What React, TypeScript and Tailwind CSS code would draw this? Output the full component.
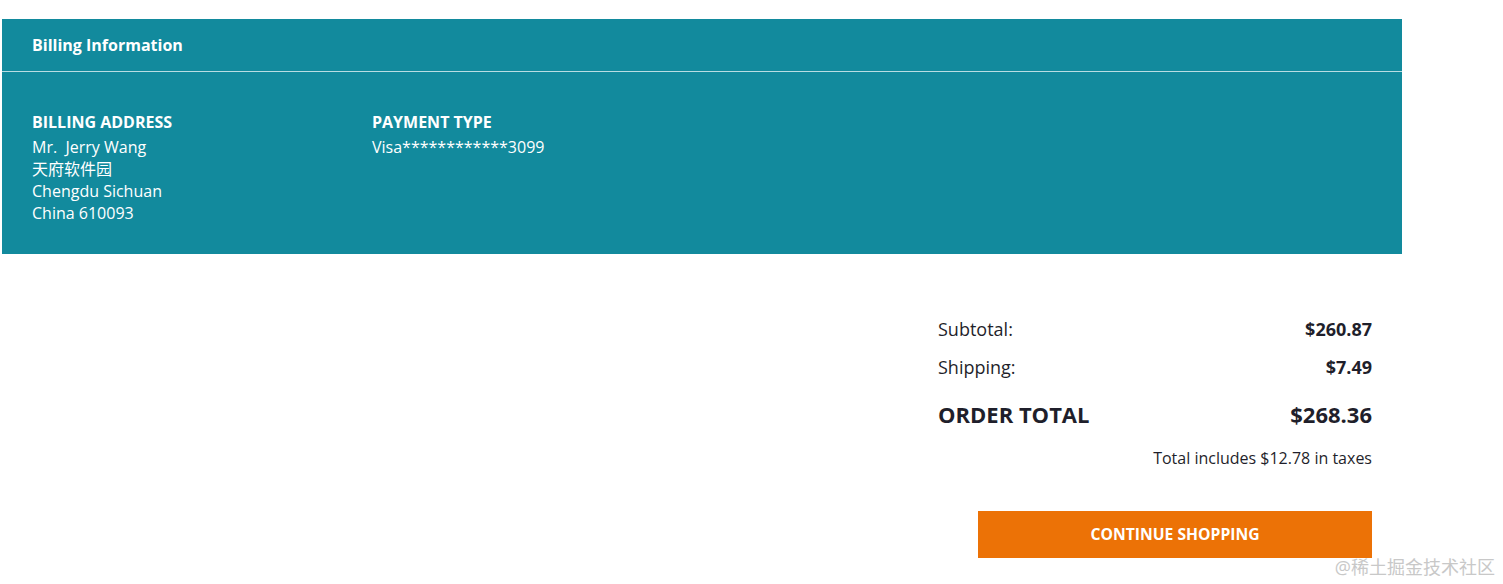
export default function App() {
  const font = { fontFamily: '"Open Sans", "Noto Sans CJK SC", sans-serif' };
  return (
    <div className="relative w-[1503px] h-[584px] bg-white text-[#1f1f2b]" style={font}>
      <div className="pt-[19px] pl-[2px]">
        <div className="w-[1400px] bg-[#128a9d] text-white">
          <div className="h-[53px] flex items-center px-[30px] border-b border-[#b9dde3]">
            <h2 className="text-[16px] font-bold">Billing Information</h2>
          </div>
          <div className="flex px-[30px] pt-[39px] pb-[30px] text-[16px] leading-[22px]">
            <div className="w-[340px]">
              <div className="font-bold uppercase mb-[3px]">Billing Address</div>
              <div>Mr.&nbsp; Jerry Wang</div>
              <div>天府软件园</div>
              <div>Chengdu Sichuan</div>
              <div>China 610093</div>
            </div>
            <div>
              <div className="font-bold uppercase mb-[3px]">Payment Type</div>
              <div>Visa************3099</div>
            </div>
          </div>
        </div>
      </div>

      <div className="flex justify-end pr-[131px] pt-[61px]">
        <div className="w-[434px]">
          <div className="flex justify-between items-center h-[28px] text-[18px]">
            <span>Subtotal:</span>
            <span className="font-bold">$260.87</span>
          </div>
          <div className="flex justify-between items-center h-[28px] mt-[10px] text-[18px]">
            <span>Shipping:</span>
            <span className="font-bold">$7.49</span>
          </div>
          <div className="flex justify-between items-center h-[32px] mt-[17px] text-[22px] font-bold">
            <span>ORDER TOTAL</span>
            <span>$268.36</span>
          </div>
          <div className="text-right text-[16px] mt-[16px] leading-[24px]">
            Total includes $12.78 in taxes
          </div>
          <div className="flex justify-end mt-[41px]">
            <button className="w-[394px] h-[47px] bg-[#ec7206] text-white font-bold text-[15.7px] uppercase">
              Continue Shopping
            </button>
          </div>
        </div>
      </div>

      <div className="absolute right-[8px] bottom-[8px] text-[18px] text-[#c8c8c8] leading-none">
        @稀土掘金技术社区
      </div>
    </div>
  );
}
